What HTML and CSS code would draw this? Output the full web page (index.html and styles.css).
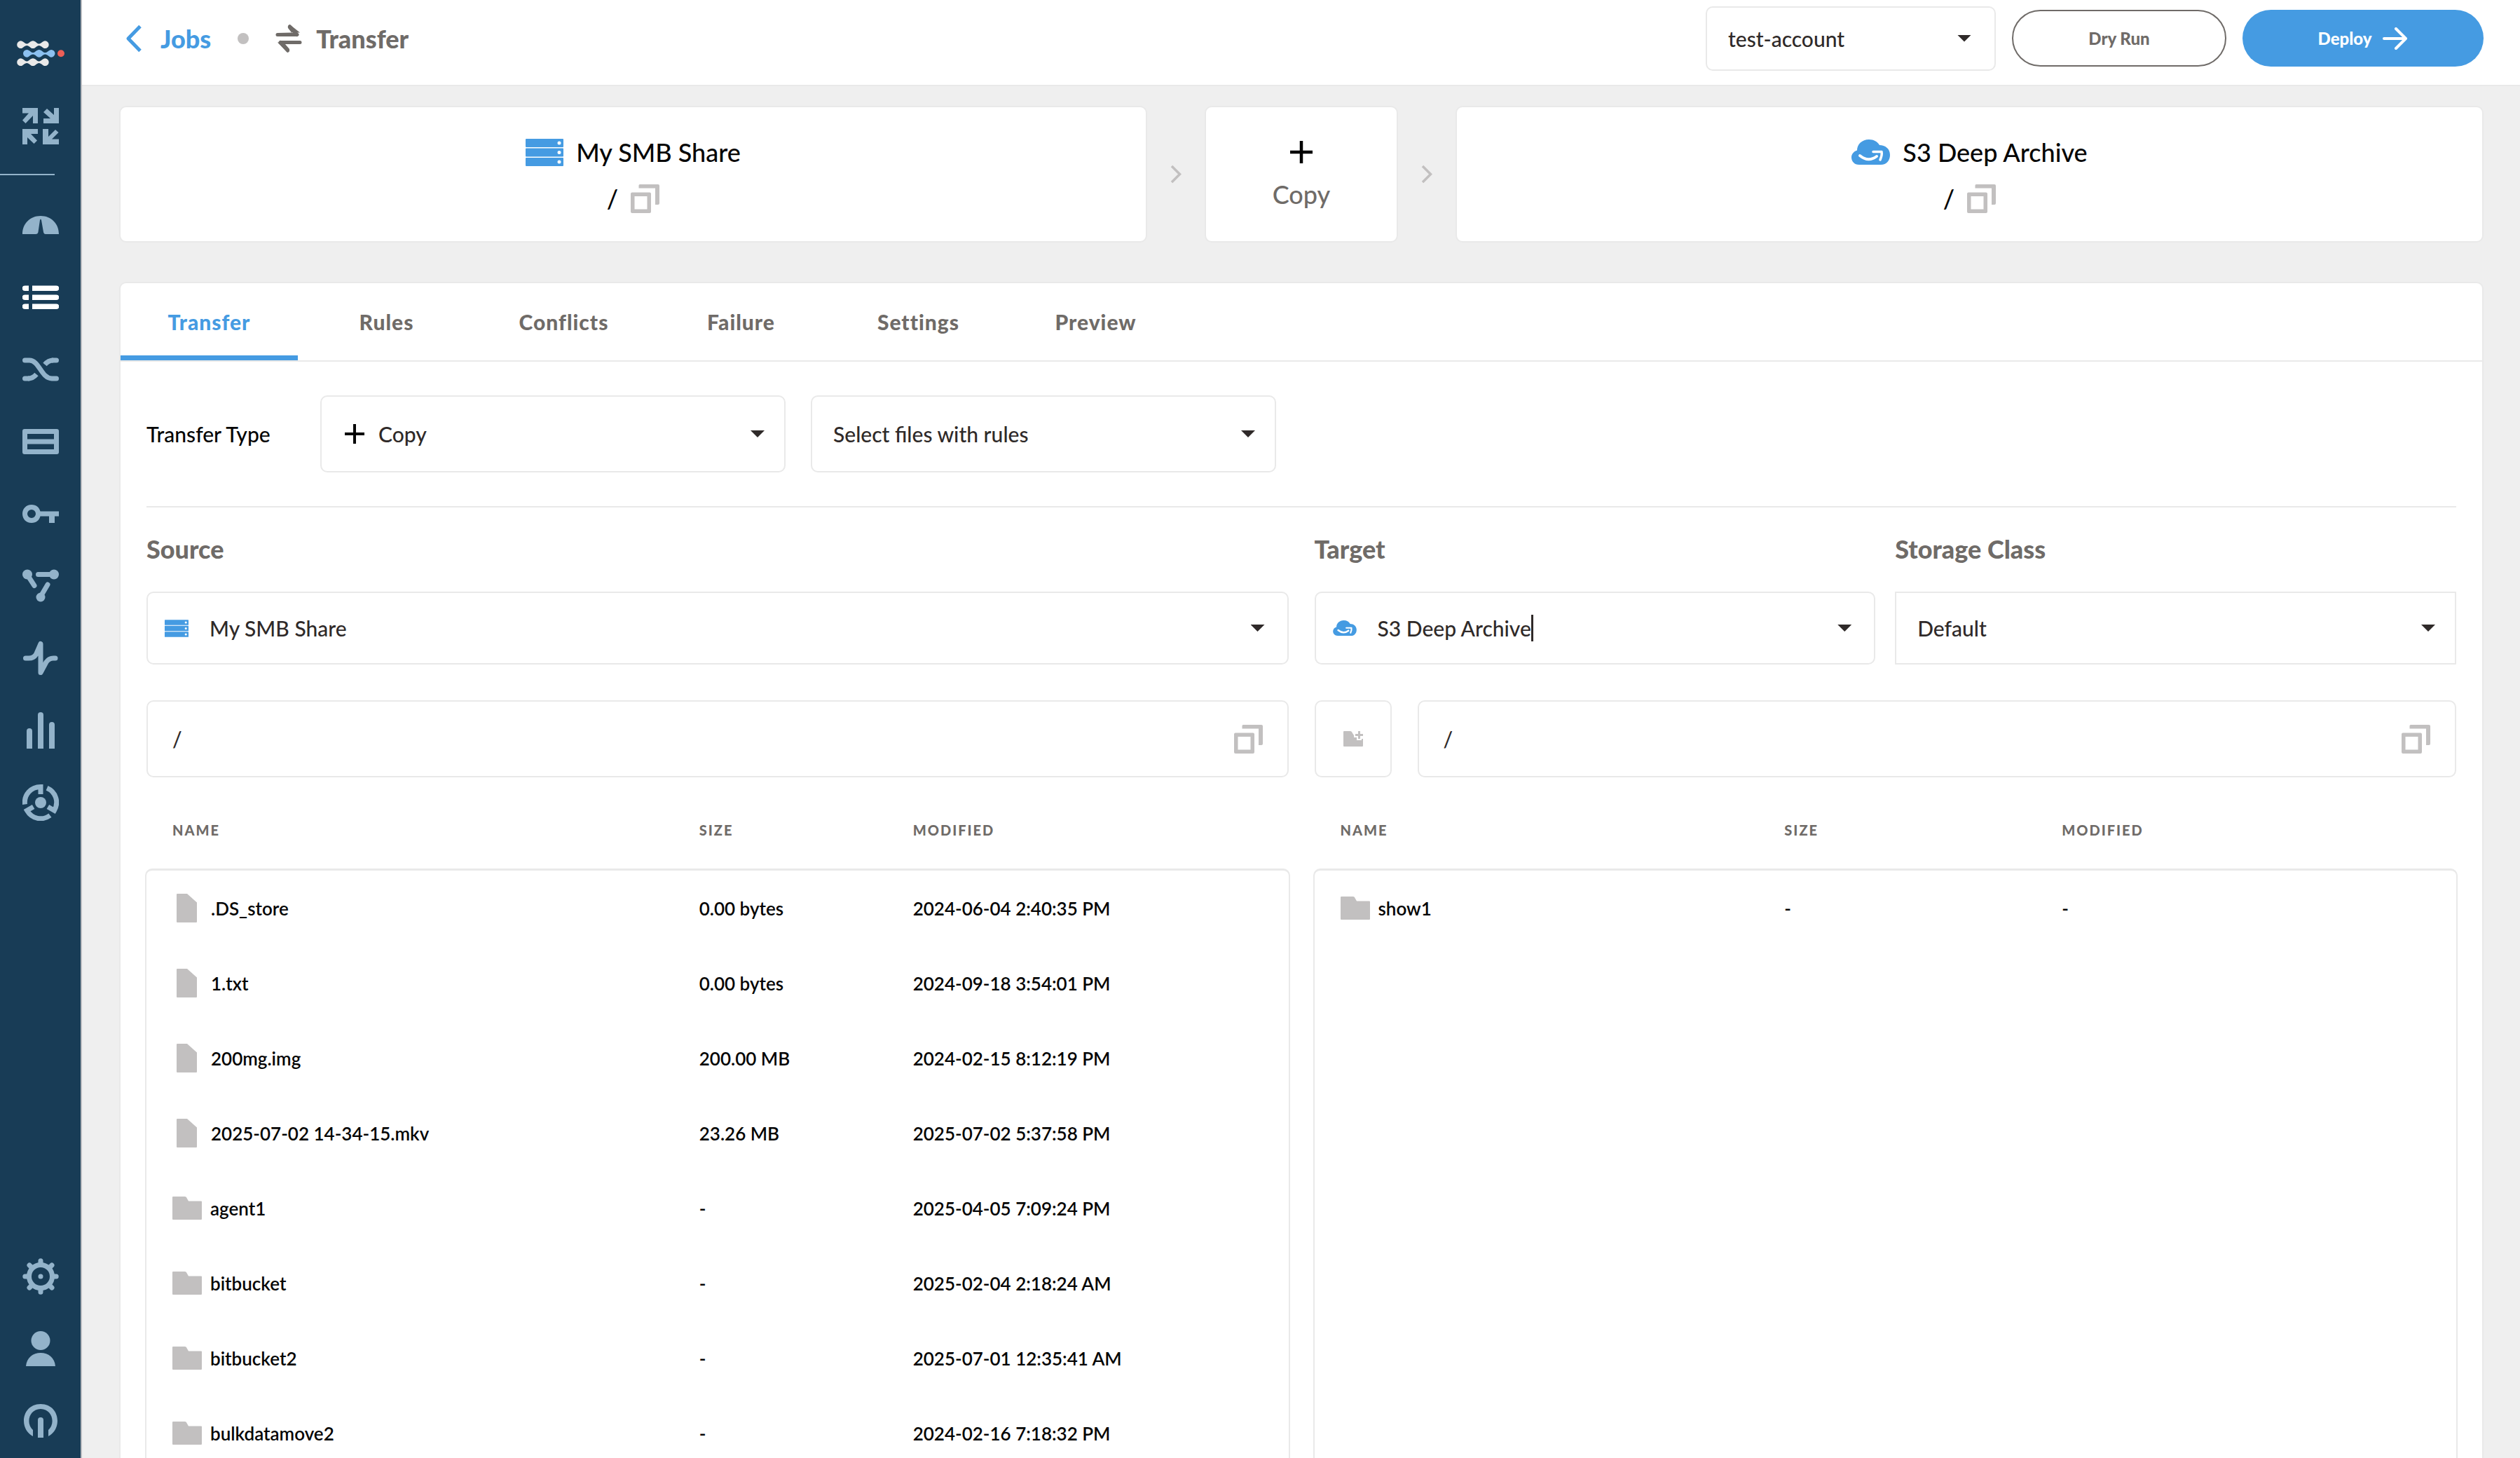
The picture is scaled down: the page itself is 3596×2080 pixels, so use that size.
FILE: index.html
```html
<!DOCTYPE html>
<html lang="en">
<head>
  <meta charset="UTF-8" />
  <meta name="viewport" content="width=device-width, initial-scale=1.0" />
  <title>Transfer - Jobs</title>
  <link rel="stylesheet" href="styles.css">
</head>
<body>
  <!-- Shared icons -->
  <svg class="sprite" aria-hidden="true">
    <symbol id="icon-server" viewBox="0 0 54 39">
      <path fill-rule="evenodd" d="M1 0H53a1 1 0 0 1 1 1V11a1 1 0 0 1-1 1H1a1 1 0 0 1-1-1V1a1 1 0 0 1 1-1ZM48 3.500a2.500 2.500 0 1 0 0 5a2.500 2.500 0 0 0 0-5ZM1 13.500H53a1 1 0 0 1 1 1v10a1 1 0 0 1-1 1H1a1 1 0 0 1-1-1v-10a1 1 0 0 1 1-1ZM48 17a2.500 2.500 0 1 0 0 5a2.500 2.500 0 0 0 0-5ZM1 27H53a1 1 0 0 1 1 1V38a1 1 0 0 1-1 1H1a1 1 0 0 1-1-1V28a1 1 0 0 1 1-1ZM48 30.500a2.500 2.500 0 1 0 0 5a2.500 2.500 0 0 0 0-5Z"/>
    </symbol>
    <symbol id="icon-cloud" viewBox="0 0 55 36">
      <path d="M11 36C4 36 0 31 0 25.500C0 21 3 17 8 15.500C8 7 15 0 25 0C32 0 37 3 40 8C48 8 55 13 55 22C55 30 50 36 42 36Z"/>
      <path d="M12 23Q24 33 36 24" fill="none" stroke="#fff" stroke-width="4" stroke-linecap="round"/>
      <path d="M31 17.500H43Q44 22 41 29" fill="none" stroke="#fff" stroke-width="3.500" stroke-linecap="round" stroke-linejoin="round"/>
    </symbol>
    <symbol id="icon-copy" viewBox="0 0 41 41">
      <path fill-rule="evenodd" d="M2 11.500H27a2 2 0 0 1 2 2V39a2 2 0 0 1-2 2H2a2 2 0 0 1-2-2V13.500a2 2 0 0 1 2-2ZM5.500 17V35.500H23.500V17Z"/>
      <path d="M13 0H39a2 2 0 0 1 2 2V27a2 2 0 0 1-2 2H35V5.500H11.500V1.500A1.500 1.500 0 0 1 13 0Z"/>
    </symbol>
    <symbol id="icon-file" viewBox="0 0 29 41">
      <path d="M1 0H15L29 12.500V40a1 1 0 0 1-1 1H1a1 1 0 0 1-1-1V1a1 1 0 0 1 1-1Z"/>
    </symbol>
    <symbol id="icon-folder" viewBox="0 0 42 33">
      <path d="M1 0H18Q20 0 21 3L23 6.500H41a1 1 0 0 1 1 1V32a1 1 0 0 1-1 1H1a1 1 0 0 1-1-1V1a1 1 0 0 1 1-1Z"/>
    </symbol>
    <symbol id="icon-plus" viewBox="0 0 32 32">
      <path d="M16 0V32M0 16H32" fill="none" stroke="#000" stroke-width="4.500"/>
    </symbol>
    <symbol id="icon-next" viewBox="0 0 16 27">
      <path d="M2 2L13.500 13.500L2 25" fill="none" stroke="#c2c0c0" stroke-width="3.500"/>
    </symbol>
  </svg>

  <div class="app">
    <aside class="sidebar">
      <a class="logo" href="#" aria-label="Home">
        <svg width="68" height="37" viewBox="0 0 68 37">
          <g id="chain" fill="#e9e9e9">
            <path d="M5.600 .3C9 .3 11 4.500 14.300 4.500S19 .3 23 .3S28 4.500 31.600 4.500S37 .3 40.300 .3a5.400 5.400 0 0 1 0 10.800C37 11.100 35 6.900 31.600 6.900S27 11.100 23 11.100S18 6.900 14.300 6.900S9 11.100 5.600 11.100a5.400 5.400 0 0 1 0-10.800Z"/>
          </g>
          <path fill="#8cc0f0" d="M14.400 12.900C18 12.900 20 17.100 23.100 17.100S28 12.900 31.800 12.900S37 17.100 40.400 17.100S46 12.900 49.100 12.900a5.400 5.400 0 0 1 0 10.800C46 23.700 44 19.500 40.400 19.500S36 23.700 31.800 23.700S27 19.500 23.100 19.500S18 23.700 14.400 23.700a5.400 5.400 0 0 1 0-10.800Z"/>
          <use href="#chain" y="25"/>
          <circle cx="63" cy="18.300" r="5" fill="#ed5f57"/>
        </svg>
      </a>
      <a class="expand" href="#" aria-label="Migrations">
        <svg width="52" height="52" viewBox="0 0 52 52">
          <path d="M0 0H22V22H15V11L4.500 22L0 17.500L9 7.500H0ZM52 0V22H30V15H40L30 6L35 1L45 10V0ZM0 30H22V37H12L21 46.500L16.500 51L7 42V52H0ZM29 30H37V41L47 31L51.500 35L42 44.500H52V52H29Z"/>
        </svg>
      </a>
      <hr class="side-rule">
      <nav class="side-nav" aria-label="Main">
        <a href="#" aria-label="Dashboard">
          <svg width="52" height="52" viewBox="0 0 52 52"><path d="M0 39C0 24 11 13 26 13S52 24 52 39H33Q30.500 39 30 36L27 19Q26 16 25 19L22.500 36Q22 39 19 39Z"/></svg>
        </a>
        <a class="active" href="#" aria-label="Jobs">
          <svg width="52" height="52" viewBox="0 0 52 52"><path d="M3.500 9.500H9V17H3.500a3.700 3.700 0 0 1 0-7.500ZM14 9.500H48.500a3.700 3.700 0 0 1 0 7.500H14ZM3.500 22.500H9V30H3.500a3.700 3.700 0 0 1 0-7.500ZM14 22.500H48.500a3.700 3.700 0 0 1 0 7.500H14ZM3.500 35.500H9V43H3.500a3.700 3.700 0 0 1 0-7.500ZM14 35.500H48.500a3.700 3.700 0 0 1 0 7.500H14Z"/></svg>
        </a>
        <a href="#" aria-label="Flows">
          <svg class="lines" width="52" height="52" viewBox="0 0 52 52"><path stroke-linecap="round" d="M3.500 13H10C24 13 27 39 42 39H48.500"/><path stroke-linecap="round" d="M48.500 13H43"/><path d="M44 13Q37 13 32 19M8 39Q15 39 20 33"/><path stroke-linecap="round" d="M3.500 39H9"/></svg>
        </a>
        <a href="#" aria-label="Storage">
          <svg width="52" height="52" viewBox="0 0 52 52"><path fill-rule="evenodd" d="M3 8H49a3 3 0 0 1 3 3V41a3 3 0 0 1-3 3H3a3 3 0 0 1-3-3V11a3 3 0 0 1 3-3ZM7 15V22.500H45V15ZM7 29.500V37H45V29.500Z"/></svg>
        </a>
        <a href="#" aria-label="Credentials">
          <svg width="52" height="52" viewBox="0 0 52 52"><path fill-rule="evenodd" d="M13 13C20 13 24 17 25.500 22.500H52V29.500H46V39H38V29.500H25.500C24 35 20 39 13 39C5 39 0 33 0 26S5 13 13 13ZM13 20a6 6 0 1 0 0 12a6 6 0 0 0 0-12Z"/></svg>
        </a>
        <a href="#" aria-label="Nodes">
          <svg width="52" height="52" viewBox="0 0 52 52"><path class="lines" stroke-linecap="round" d="M7 10L17 25.500M22.500 9.500H44M36 24L26 41"/><circle cx="7" cy="9.500" r="7"/><circle cx="45" cy="9.500" r="7"/><circle cx="26" cy="42" r="6.500"/></svg>
        </a>
        <a href="#" aria-label="Activity">
          <svg class="lines" width="52" height="52" viewBox="0 0 52 52"><path stroke-linecap="round" stroke-linejoin="round" d="M4.500 26H9Q16 26 19.500 20.500L26 5.500V46.500L34 31.500Q38 26 44 26H47"/></svg>
        </a>
        <a href="#" aria-label="Reports">
          <svg width="52" height="52" viewBox="0 0 52 52"><path d="M6 52V27a4 4 0 0 1 8 0V52ZM22 52V4a4 4 0 0 1 8 0V52ZM38 52V18a4 4 0 0 1 8 0V52Z"/></svg>
        </a>
        <a href="#" aria-label="Monitor">
          <svg width="52" height="52" viewBox="0 0 52 52"><circle cx="26" cy="26" r="8"/><g id="arc"><path class="lines" d="M3.500 28.500C2 15 12 3.500 26 3.500V14"/></g><use href="#arc" transform="rotate(120 26 26)"/><use href="#arc" transform="rotate(240 26 26)"/></svg>
        </a>
      </nav>
      <nav class="side-nav side-bottom" aria-label="Account">
        <a href="#" aria-label="Settings">
          <svg width="52" height="52" viewBox="0 0 52 52"><circle class="lines" cx="26" cy="26" r="16.500"/><circle cx="26" cy="26" r="3.500"/><path class="lines" stroke-linecap="round" d="M26 3.800V8M26 44V48.200M3.800 26H8M44 26H48.200M10 10L13 13M39 39L42 42M42 10L39 13M13 39L10 42"/></svg>
        </a>
        <a href="#" aria-label="Profile">
          <svg width="52" height="52" viewBox="0 0 52 52"><circle cx="26" cy="14.500" r="13.500"/><path d="M5 51C6 39 15 32 26 32S46 39 47 51Z"/></svg>
        </a>
        <a href="#" aria-label="Sign out">
          <svg width="52" height="52" viewBox="0 0 52 52"><path d="M15 48V39C4 29 10 9 26 9S48 29 37 39V48C58 37 53 2 26 2S-6 37 15 48Z"/><path d="M22 50V25a4 4 0 0 1 8 0V50Z"/></svg>
        </a>
      </nav>
    </aside>

    <div class="content">
      <header class="topbar">
        <a class="crumb-link" href="#">
          <svg width="24" height="40" viewBox="0 0 24 40"><path d="M21 2.500L4 20L21 37.500" fill="none" stroke="#459be2" stroke-width="5" stroke-linejoin="round"/></svg>
          Jobs
        </a>
        <span class="dot"></span>
        <h1 class="crumb-current">
          <svg width="38" height="40" viewBox="0 0 38 40"><path d="M3 11.500H35L20.500 0Q17 1 18 5L23.500 12ZM3 11.500H30M35 25.500H3L17.500 40Q20.500 39 20 35L14 28Z" stroke="none"/><path d="M3 14.500H30M8 25.500H35" fill="none" stroke="#6f6b68" stroke-width="5" stroke-linecap="round"/><path d="M20.500 3L31 14.500M17.500 37L7 25.500" fill="none" stroke="#6f6b68" stroke-width="5" stroke-linecap="round"/></svg>
          Transfer
        </h1>
        <div class="field account-field">
          <select aria-label="Account">
            <option>test-account</option>
          </select>
        </div>
        <button type="button" class="btn btn-outline">Dry Run</button>
        <button type="button" class="btn btn-primary">
          Deploy
          <svg width="36" height="32" viewBox="0 0 36 32"><path d="M2 16H33M19 2L33 16L19 30" fill="none" stroke="#fff" stroke-width="4" stroke-linecap="round" stroke-linejoin="round"/></svg>
        </button>
      </header>

      <main class="main">
        <section class="route">
          <div class="card">
            <div class="card-title">
              <svg class="blue" width="54" height="39"><use href="#icon-server"/></svg>
              My SMB Share
            </div>
            <div class="card-path">/ <button type="button" class="icon-btn" aria-label="Copy source path"><svg width="41" height="41"><use href="#icon-copy"/></svg></button></div>
          </div>
          <svg class="route-arrow" width="16" height="27"><use href="#icon-next"/></svg>
          <div class="card card-action">
            <div class="card-title"><svg width="32" height="32"><use href="#icon-plus"/></svg></div>
            <div class="card-path">Copy</div>
          </div>
          <svg class="route-arrow" width="16" height="27"><use href="#icon-next"/></svg>
          <div class="card">
            <div class="card-title">
              <svg class="blue" width="55" height="36"><use href="#icon-cloud"/></svg>
              S3 Deep Archive
            </div>
            <div class="card-path">/ <button type="button" class="icon-btn" aria-label="Copy target path"><svg width="41" height="41"><use href="#icon-copy"/></svg></button></div>
          </div>
        </section>

        <section class="panel">
          <div class="tabs" role="tablist">
            <button type="button" role="tab" aria-selected="true" class="tab active">Transfer</button>
            <button type="button" role="tab" aria-selected="false" class="tab">Rules</button>
            <button type="button" role="tab" aria-selected="false" class="tab">Conflicts</button>
            <button type="button" role="tab" aria-selected="false" class="tab">Failure</button>
            <button type="button" role="tab" aria-selected="false" class="tab">Settings</button>
            <button type="button" role="tab" aria-selected="false" class="tab">Preview</button>
          </div>

          <div class="panel-body">
            <div class="type-row">
              <label for="transfer-type">Transfer Type</label>
              <div class="field type-field icon-field">
                <svg width="28" height="28"><use href="#icon-plus"/></svg>
                <select id="transfer-type">
                  <option>Copy</option>
                </select>
              </div>
              <div class="field type-field">
                <select aria-label="File selection">
                  <option>Select files with rules</option>
                </select>
              </div>
            </div>

            <div class="sides">
              <div class="side">
                <div class="storage-row">
                  <div class="storage">
                    <label class="heading" for="source">Source</label>
                    <div class="field storage-field">
                      <svg class="blue" width="34" height="25"><use href="#icon-server"/></svg>
                      <select id="source">
                        <option>My SMB Share</option>
                      </select>
                    </div>
                  </div>
                </div>
                <div class="path-row">
                  <div class="path-field">
                    <input type="text" value="/" aria-label="Source path">
                    <button type="button" class="icon-btn" aria-label="Copy source path"><svg width="41" height="41"><use href="#icon-copy"/></svg></button>
                  </div>
                </div>
                <table class="files">
                  <thead>
                    <tr><th>NAME</th><th>SIZE</th><th>MODIFIED</th></tr>
                  </thead>
                  <tbody>
                    <tr><td><svg class="file" width="29" height="41"><use href="#icon-file"/></svg>.DS_store</td><td>0.00 bytes</td><td>2024-06-04 2:40:35 PM</td></tr>
                    <tr><td><svg class="file" width="29" height="41"><use href="#icon-file"/></svg>1.txt</td><td>0.00 bytes</td><td>2024-09-18 3:54:01 PM</td></tr>
                    <tr><td><svg class="file" width="29" height="41"><use href="#icon-file"/></svg>200mg.img</td><td>200.00 MB</td><td>2024-02-15 8:12:19 PM</td></tr>
                    <tr><td><svg class="file" width="29" height="41"><use href="#icon-file"/></svg>2025-07-02 14-34-15.mkv</td><td>23.26 MB</td><td>2025-07-02 5:37:58 PM</td></tr>
                    <tr><td><svg width="42" height="33"><use href="#icon-folder"/></svg>agent1</td><td>-</td><td>2025-04-05 7:09:24 PM</td></tr>
                    <tr><td><svg width="42" height="33"><use href="#icon-folder"/></svg>bitbucket</td><td>-</td><td>2025-02-04 2:18:24 AM</td></tr>
                    <tr><td><svg width="42" height="33"><use href="#icon-folder"/></svg>bitbucket2</td><td>-</td><td>2025-07-01 12:35:41 AM</td></tr>
                    <tr><td><svg width="42" height="33"><use href="#icon-folder"/></svg>bulkdatamove2</td><td>-</td><td>2024-02-16 7:18:32 PM</td></tr>
                  </tbody>
                </table>
              </div>

              <div class="side">
                <div class="storage-row">
                  <div class="storage">
                    <label class="heading" for="target">Target</label>
                    <div class="field storage-field">
                      <svg class="blue" width="34" height="22"><use href="#icon-cloud"/></svg>
                      <input type="text" id="target" value="S3 Deep Archive" size="12">
                      <span class="cursor"></span>
                    </div>
                  </div>
                  <div class="storage">
                    <label class="heading" for="storage-class">Storage Class</label>
                    <div class="field square-field">
                      <select id="storage-class">
                        <option>Default</option>
                      </select>
                    </div>
                  </div>
                </div>
                <div class="path-row">
                  <button type="button" class="new-folder" aria-label="New folder">
                    <svg width="28" height="22" viewBox="0 0 28 22"><path d="M1 0H10Q12 0 13 3L15 6V9H19V13H26V11H28V21a1 1 0 0 1-1 1H1a1 1 0 0 1-1-1V1a1 1 0 0 1 1-1Z"/><path d="M21 0H24V4H28V7H24V11H21V7H17V4H21Z"/></svg>
                  </button>
                  <div class="path-field">
                    <input type="text" value="/" aria-label="Target path">
                    <button type="button" class="icon-btn" aria-label="Copy target path"><svg width="41" height="41"><use href="#icon-copy"/></svg></button>
                  </div>
                </div>
                <table class="files files-target">
                  <thead>
                    <tr><th>NAME</th><th>SIZE</th><th>MODIFIED</th></tr>
                  </thead>
                  <tbody>
                    <tr><td><svg width="42" height="33"><use href="#icon-folder"/></svg>show1</td><td>-</td><td>-</td></tr>
                  </tbody>
                </table>
              </div>
            </div>
          </div>
        </section>
      </main>
    </div>
  </div>
</body>
</html>
```
FILE: styles.css
```css
* {
  box-sizing: border-box;
}

body {
  margin: 0;
  font-family: 'Lato', sans-serif;
  font-size: 30px;
  font-weight: 500;
  background-color: #efefef;
  color: #050505;
}

svg {
  display: block;
  flex-shrink: 0;
}

button,
input,
select {
  font: inherit;
  color: inherit;
  background: none;
  border: none;
  padding: 0;
  margin: 0;
}

button {
  cursor: pointer;
}

a {
  text-decoration: none;
}

.sprite {
  position: absolute;
  width: 0;
  height: 0;
}

.app {
  display: flex;
  height: 100vh;
  overflow: hidden;
}

/* Sidebar */
.sidebar {
  width: 117px;
  flex-shrink: 0;
  display: flex;
  flex-direction: column;
  background-color: #183c56;
  border-right: 2px solid #b9bbc0;
}

.sidebar svg {
  fill: #93b3ca;
}

.lines {
  fill: none !important;
  stroke: #93b3ca;
  stroke-width: 7px;
}

.logo {
  padding: 58px 0 0 24px;
}

.expand {
  padding: 59px 0 0 32px;
}

.side-rule {
  width: 78px;
  height: 2px;
  margin: 42px 0 19px;
  border: none;
  background-color: #93b3ca;
}

.side-nav {
  display: flex;
  flex-direction: column;
}

.side-nav a {
  height: 103px;
  padding-left: 32px;
  display: flex;
  align-items: center;
}

.side-nav .active svg {
  fill: #fff;
}

.side-bottom {
  margin-top: auto;
  padding-bottom: 2px;
}

/* Top bar */
.content {
  flex: 1;
  min-width: 0;
  display: flex;
  flex-direction: column;
}

.topbar {
  height: 123px;
  flex-shrink: 0;
  display: flex;
  align-items: center;
  padding: 0 52px 12px 62px;
  background-color: #fff;
  border-bottom: 2px solid #e9e9e9;
}

.crumb-link,
.crumb-current {
  display: flex;
  align-items: center;
  margin: 0;
  font-size: 36px;
  font-weight: 900;
}

.crumb-link {
  gap: 26px;
  color: #459be2;
}

.crumb-current {
  gap: 20px;
  margin-right: auto;
  color: #6f6b68;
}

.crumb-current svg {
  fill: #6f6b68;
}

.dot {
  width: 16px;
  height: 16px;
  margin: 0 38px;
  border-radius: 50%;
  background-color: #c2c0c0;
}

.btn {
  height: 81px;
  border-radius: 41px;
  font-size: 24px;
  font-weight: 900;
  display: flex;
  align-items: center;
  justify-content: center;
}

.btn-outline {
  width: 306px;
  margin: 0 23px;
  border: 2px solid #6f6b68;
  color: #6f6b68;
}

.btn-primary {
  width: 344px;
  gap: 16px;
  background-color: #459be2;
  color: #fff;
}

/* Fields */
.field,
.path-field,
.new-folder {
  display: flex;
  align-items: center;
  background-color: #fff;
  border: 2px solid #e9e9e9;
  border-radius: 10px;
}

.field {
  color: #2f2a29;
  padding: 0 28px 0 30px;
}

.field::after {
  content: '';
  width: 20px;
  height: 10px;
  margin-left: auto;
  background-color: #2f2a29;
  clip-path: polygon(0 0, 100% 0, 50% 100%);
}

.field select {
  flex: 1;
  height: 100%;
  appearance: none;
  outline: none;
}

.account-field {
  width: 414px;
  height: 92px;
  padding-right: 33px;
}

.type-field {
  width: 664px;
  height: 110px;
}

.icon-field {
  gap: 20px;
  padding-left: 33px;
}

.storage-field {
  height: 104px;
  padding: 0 32px 0 24px;
}

.storage-field svg {
  margin-right: 30px;
}

.storage-field input {
  field-sizing: content;
  outline: none;
}

.cursor {
  width: 3px;
  height: 38px;
  background-color: #2f2a29;
}

.square-field {
  height: 104px;
  border-radius: 0;
}

.icon-btn {
  fill: #c2c0c0;
}

.blue {
  fill: #459be2;
}

/* Route cards */
.main {
  flex: 1;
  min-height: 0;
  display: flex;
  flex-direction: column;
  gap: 56px;
  padding: 28px 52px 0 53px;
}

.route {
  display: grid;
  grid-template-columns: 1fr 82px 276px 82px 1fr;
  align-items: center;
}

.route-arrow {
  justify-self: center;
}

.card {
  height: 195px;
  padding-top: 42px;
  display: flex;
  flex-direction: column;
  gap: 22px;
  background-color: #fff;
  border: 2px solid #e9e9e9;
  border-radius: 10px;
  font-size: 36px;
}

.card-title,
.card-path {
  height: 44px;
  display: flex;
  align-items: center;
  justify-content: center;
  gap: 18px;
}

.card-action {
  gap: 16px;
}

.card-action .card-path {
  color: #6f6b68;
}

/* Panel */
.panel {
  flex: 1;
  min-height: 0;
  background-color: #fff;
  border: 2px solid #e9e9e9;
  border-bottom: none;
  border-radius: 10px 10px 0 0;
}

.tabs {
  display: flex;
  border-bottom: 2px solid #e9e9e9;
}

.tab {
  width: 253px;
  height: 110px;
  border-top: 7px solid transparent;
  border-bottom: 7px solid transparent;
  font-weight: 900;
  letter-spacing: 1px;
  color: #6f6b68;
}

.tab.active {
  color: #459be2;
  border-bottom-color: #459be2;
}

.panel-body {
  padding: 0 37px;
}

.type-row {
  display: flex;
  align-items: center;
  gap: 36px;
  padding: 48px 0;
  border-bottom: 2px solid #e9e9e9;
}

.type-row label {
  width: 212px;
}

.sides {
  display: grid;
  grid-template-columns: 1fr 1fr;
  gap: 37px;
}

.side {
  display: flex;
  flex-direction: column;
}

.storage-row {
  display: flex;
  gap: 28px;
}

.storage {
  flex: 1;
}

.heading {
  height: 120px;
  padding-bottom: 2px;
  display: flex;
  align-items: center;
  font-size: 36px;
  font-weight: 900;
  color: #6f6b68;
}

.path-row {
  display: flex;
  gap: 37px;
  margin-top: 51px;
}

.path-field {
  flex: 1;
  height: 110px;
  padding: 0 35px;
}

.path-field input {
  flex: 1;
  outline: none;
  color: #2f2a29;
}

.new-folder {
  width: 110px;
  height: 110px;
  justify-content: center;
  fill: #c2c0c0;
}

/* File lists */
.files {
  flex: 1;
  display: flex;
  flex-direction: column;
  font-size: 26px;
  font-weight: 600;
}

.files tr {
  display: grid;
  grid-template-columns: 752fr 305fr 536fr;
  align-items: center;
  padding-left: 37px;
}

.files-target tr {
  grid-template-columns: 634fr 396fr 563fr;
}

.files thead tr {
  height: 130px;
  padding-top: 20px;
}

.files th {
  padding: 0;
  text-align: left;
  font-size: 20px;
  font-weight: 900;
  letter-spacing: 2px;
  color: #6f6b68;
}

.files tbody {
  flex: 1;
  display: block;
  margin: 0 -2px;
  border: 2px solid #e9e9e9;
  border-top-width: 3px;
  border-radius: 10px;
}

.files tbody tr {
  height: 107px;
}

.files td {
  display: flex;
  align-items: center;
  padding: 0;
}

.files td svg {
  margin-right: 12px;
  fill: #c2c0c0;
}

.files td .file {
  margin: 0 20px 0 6px;
}
```
